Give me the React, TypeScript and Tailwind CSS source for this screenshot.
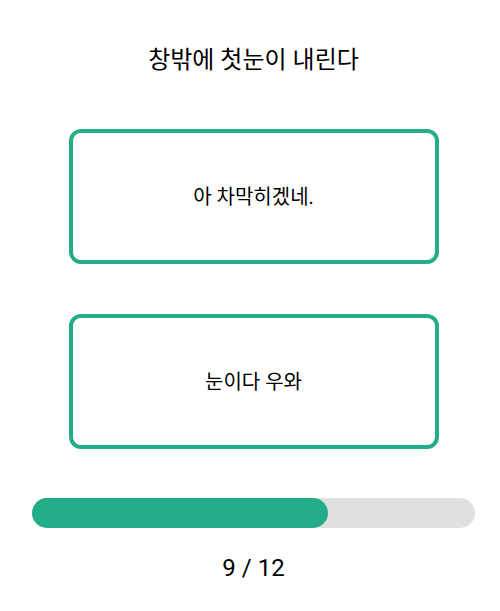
import React from "react";

const font = { fontFamily: 'Roboto, "Noto Sans CJK KR", sans-serif' };

export default function App() {
  return (
    <div className="bg-white w-[500px] h-[611px] pl-[32px] pr-[25px] flex flex-col items-center text-black" style={font}>
      <div className="mt-[44px] h-[32px] text-[24px] leading-[32px]">창밖에 첫눈이 내린다</div>
      <div className="mt-[53px] w-[370px] h-[135px] border-[4px] border-[#22ad88] rounded-[12px] flex items-center justify-center text-[20px]">
        아 차막히겠네.
      </div>
      <div className="mt-[50px] w-[370px] h-[135px] border-[4px] border-[#22ad88] rounded-[12px] flex items-center justify-center text-[20px]">
        눈이다 우와
      </div>
      <div className="mt-[49px] w-full h-[30px] rounded-full bg-[#e0e0df] flex">
        <div className="w-[296px] h-full rounded-full bg-[#22ad88]" />
      </div>
      <div className="mt-[24px] h-[32px] text-[24px] leading-[32px]">9 / 12</div>
    </div>
  );
}
